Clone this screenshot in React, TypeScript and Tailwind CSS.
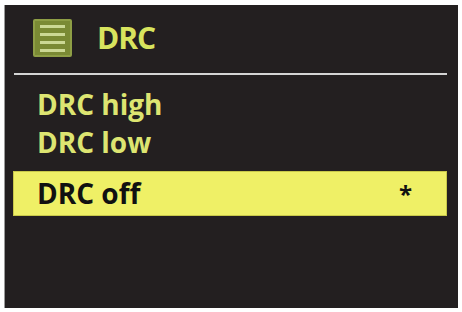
import React from 'react';

const items = ['DRC high', 'DRC low'];

function MenuIcon() {
  return (
    <div className="w-[39px] h-[38px] rounded-[2px] bg-[#7a8a34] border-2 border-[#8e9e45] flex flex-col justify-center gap-[5px] px-[5px]">
      <div className="h-[3px] bg-[#cbd894]" />
      <div className="h-[3px] bg-[#cbd894]" />
      <div className="h-[3px] bg-[#cbd894]" />
      <div className="h-[3px] bg-[#cbd894]" />
    </div>
  );
}

export default function App() {
  return (
    <div
      className="w-[462px] h-[312px] bg-white pl-[4px] pr-[4px] pt-[5px] pb-[4px]"
      style={{ fontFamily: '"Open Sans", "Noto Sans", sans-serif' }}
    >
      <div className="h-full bg-[#231f20] flex flex-col border-l border-[#9a9a9a]">
        {/* Header */}
        <div className="flex items-center pl-[28px] pt-[14px] gap-[25px]">
          <MenuIcon />
          <span className="text-[30px] leading-none font-bold text-[#d8e45e] tracking-[-1px]">DRC</span>
        </div>

        {/* Divider */}
        <div className="mt-[16px] ml-[9px] mr-[11px] h-[2px] bg-[#d4d4d4]" />

        {/* List */}
        <div className="mt-[10px] ml-[8px] mr-[11px] flex flex-col">
          {items.map((item) => (
            <div key={item} className="h-[38px] leading-[38px] pl-[24px] text-[28px] font-bold text-[#dde571]">
              {item}
            </div>
          ))}
          <div className="mt-[10px] h-[45px] bg-[#eff066] border border-[#c8c84a] flex items-center justify-between pl-[23px] pr-[34px]">
            <span className="text-[28px] leading-[43px] font-bold text-[#111]">DRC off</span>
            <span className="text-[24px] leading-[40px] font-bold text-[#111]">*</span>
          </div>
        </div>
      </div>
    </div>
  );
}
